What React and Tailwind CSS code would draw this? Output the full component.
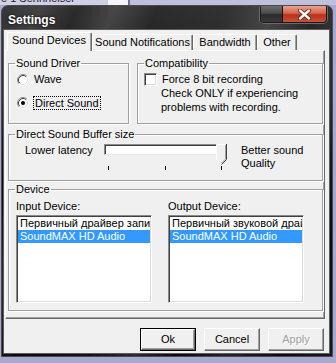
function Radio({ checked }) {
  return (
    <svg width="12" height="12" viewBox="0 0 12 12" className="shrink-0">
      <circle cx="6" cy="6" r="5.5" fill="#ffffff" />
      <path d="M2.11 9.89 A5.5 5.5 0 0 1 9.89 2.11" stroke="#8a8a8a" fill="none" />
      <path d="M2.82 9.18 A4.5 4.5 0 0 1 9.18 2.82" stroke="#404040" fill="none" />
      <path d="M9.18 2.82 A4.5 4.5 0 0 1 2.82 9.18" stroke="#dcdcdc" fill="none" />
      {checked && <circle cx="6" cy="6" r="2" fill="#000" />}
    </svg>
  );
}

function Group({ title, className, children }) {
  return (
    <fieldset className={"border border-[#a0a0a0] shadow-[inset_1px_1px_0_#ffffff,1px_1px_0_#ffffff] " + className}>
      <legend className="ml-[6px] px-[1px] text-[11px] leading-[13px]">{title}</legend>
      {children}
    </fieldset>
  );
}

function ListBox({ first }) {
  return (
    <div className="w-[136px] h-[88px] bg-white border border-t-[#8a8a8a] border-l-[#8a8a8a] border-r-white border-b-white shadow-[inset_1px_1px_0_#404040,inset_-1px_-1px_0_#dcdcdc] p-[1px] overflow-hidden">
      <div className="h-[13px] pl-[2px] whitespace-nowrap overflow-hidden leading-[13px]">{first}</div>
      <div className="h-[13px] pl-[2px] whitespace-nowrap overflow-hidden leading-[13px] bg-[#3399ff] text-white">SoundMAX HD Audio</div>
    </div>
  );
}

function Tab({ label, w, selected }) {
  if (selected) {
    return (
      <div className={"relative z-10 h-[19px] -mb-[1px] bg-[#f0f0f0] border-t border-l border-r border-t-white border-l-white border-r-[#696969] rounded-t-[2px] shadow-[inset_-1px_0_0_#a0a0a0] pt-[1px] pl-[4px] leading-[13px] text-[11px] whitespace-nowrap " + w}>
        {label}
      </div>
    );
  }
  return (
    <div className={"h-[16px] bg-[#f0f0f0] border-t border-l border-r border-t-white border-l-white border-r-[#696969] rounded-t-[2px] shadow-[inset_-1px_0_0_#a0a0a0] pt-[1px] flex justify-center leading-[13px] text-[11px] whitespace-nowrap " + w}>
      {label}
    </div>
  );
}

function Button({ children, def, disabled }) {
  if (def) {
    return (
      <div className="w-[56px] h-[23px] border border-black">
        <div className="h-full bg-[#f0f0f0] border border-t-white border-l-white border-r-[#696969] border-b-[#696969] shadow-[inset_-1px_-1px_0_#a0a0a0] flex items-center justify-center text-[11px] leading-[13px]">
          {children}
        </div>
      </div>
    );
  }
  return (
    <div className={"w-[56px] h-[23px] bg-[#f0f0f0] border border-t-white border-l-white border-r-[#696969] border-b-[#696969] shadow-[inset_-1px_-1px_0_#a0a0a0] flex items-center justify-center text-[11px] leading-[13px] " + (disabled ? "text-[#a0a0a0] [text-shadow:1px_1px_0_#ffffff]" : "")}>
      {children}
    </div>
  );
}

export default function App() {
  return (
    <div className="w-[336px] h-[363px] bg-[#a9a8d2] overflow-hidden font-['Liberation_Sans',Arial,sans-serif] text-[11px] leading-[13px] text-black">
      {/* background application strip */}
      <div className="h-[5px] flex overflow-hidden">
        <div className="w-[108px] bg-[#cfd0e8] overflow-hidden">
          <div className="-mt-[7px] pl-[1px] text-[11px] leading-[11px] text-[#222]">e 1 Sennheiser</div>
        </div>
        <div className="w-[20px] bg-[#f4f4fa]" />
        <div className="w-[2px] bg-[#70708a]" />
        <div className="flex-1 bg-[#bfc0dc]" />
      </div>

      {/* window */}
      <div className="ml-[1px] w-[332px] h-[352px] rounded-t-[7px] border border-[#4a4a4a] flex flex-col overflow-hidden bg-[linear-gradient(180deg,rgba(255,255,255,0.14)_0%,rgba(255,255,255,0)_40%),linear-gradient(112deg,#151515_0%,#262626_8%,#0a0a0a_16%,#2a2a2a_24%,#0b0b0b_33%,#121212_48%,#2c2c2c_58%,#0a0a0a_67%,#232323_78%,#0a0a0a_90%,#1a1a1a_100%)]">
        {/* title bar */}
        <div className="h-[24px] flex justify-between pl-[6px] pr-[5px]">
          <div className="pt-[8px] text-[12px] leading-[13px] font-bold text-white [text-shadow:0_0_3px_#000]">Settings</div>
          <div className="flex h-[17px] rounded-b-[4px] overflow-hidden border border-t-0 border-[#1a1a1a] shadow-[0_0_0_1px_#6a6a6a]">
            <div className="w-[22px] h-full bg-[linear-gradient(180deg,#6e6e6e_0%,#4a4a4a_45%,#2a2a2a_55%,#3a3a3a_100%)] border-r border-[#151515]" />
            <div className="w-[43px] h-full bg-[linear-gradient(180deg,#e9a08c_0%,#d5664c_45%,#b8321a_55%,#c9503a_100%)] flex items-center justify-center">
              <svg width="13" height="11" viewBox="0 0 13 11">
                <path d="M2 1.5 L11 9.5 M11 1.5 L2 9.5" stroke="#5a1a10" strokeWidth="4" strokeLinecap="round" />
                <path d="M2 1.5 L11 9.5 M11 1.5 L2 9.5" stroke="#ffffff" strokeWidth="2.4" strokeLinecap="round" />
              </svg>
            </div>
          </div>
        </div>

        {/* body */}
        <div className="flex-1 flex pl-[2px] pr-[3px] pb-[3px]">
          <div className="w-[325px] h-full bg-[#f0f0f0] shadow-[0_0_0_1px_#5c5c5c] flex flex-col">
            {/* tabs */}
            <div className="h-[18px] mt-[2px] pl-[3px] flex items-end">
              <Tab label="Sound Devices" w="w-[85px]" selected />
              <Tab label="Sound Notifications" w="w-[101px]" />
              <Tab label="Bandwidth" w="w-[64px]" />
              <Tab label="Other" w="w-[40px]" />
            </div>

            {/* panel */}
            <div className="ml-[1px] w-[320px] h-[269px] border border-t-white border-l-white border-r-[#696969] border-b-[#696969] shadow-[inset_-1px_-1px_0_#a0a0a0] pl-[2px] flex flex-col">
              <div className="mt-[6px] flex gap-[8px]">
                <Group title="Sound Driver" className="w-[121px] h-[67px]">
                  <div className="mt-[3px] pl-[8px] h-[13px] flex items-center gap-[5px]">
                    <Radio />
                    <span>Wave</span>
                  </div>
                  <div className="mt-[10px] pl-[8px] h-[14px] flex items-center gap-[4px]">
                    <Radio checked />
                    <span className="border border-dotted border-black px-[1px] leading-[12px]">Direct Sound</span>
                  </div>
                </Group>
                <Group title="Compatibility" className="w-[186px] h-[67px]">
                  <div className="mt-[3px] pl-[6px] h-[13px] flex items-center gap-[5px]">
                    <div className="w-[13px] h-[13px] bg-white border border-t-[#8a8a8a] border-l-[#8a8a8a] border-r-white border-b-white shadow-[inset_1px_1px_0_#404040,inset_-1px_-1px_0_#dcdcdc]" />
                    <span>Force 8 bit recording</span>
                  </div>
                  <div className="pl-[23px] leading-[14px]">
                    <div>Check ONLY if experiencing</div>
                    <div>problems with recording.</div>
                  </div>
                </Group>
              </div>

              <Group title="Direct Sound Buffer size" className="mt-[4px] w-[315px] h-[53px]">
                <div className="mt-[3px] pl-[16px] flex items-start">
                  <div className="w-[79px]">Lower latency</div>
                  <div className="relative w-[124px] h-[27px]">
                    <div className="w-[116px] h-[11px] bg-white border border-t-[#8a8a8a] border-l-[#8a8a8a] border-r-white border-b-[#e8e8e8] shadow-[inset_1px_1px_0_#404040]" />
                    <svg className="absolute left-[112px] top-0" width="11" height="21" viewBox="0 0 11 21">
                      <path d="M0.5 0.5 H10.5 V15.5 L5.5 20.5 L0.5 15.5 Z" fill="#f0f0f0" />
                      <path d="M0.5 15.5 V0.5 H9.5" stroke="#ffffff" fill="none" />
                      <path d="M10.5 0 V15.5 L5.5 20.5" stroke="#404040" fill="none" />
                      <path d="M9.5 1 V15 L5.5 19" stroke="#a0a0a0" fill="none" />
                      <path d="M0.5 15.5 L5 20" stroke="#ffffff" fill="none" />
                    </svg>
                    <div className="absolute left-[4px] top-[22px] w-[1px] h-[4px] bg-black" />
                    <div className="absolute left-[61px] top-[22px] w-[1px] h-[4px] bg-black" />
                    <div className="absolute left-[117px] top-[22px] w-[1px] h-[4px] bg-black" />
                  </div>
                  <div className="ml-[13px]">
                    <div>Better sound</div>
                    <div>Quality</div>
                  </div>
                </div>
              </Group>

              <Group title="Device" className="mt-[2px] w-[315px] h-[128px]">
                <div className="mt-[4px] pl-[7px] flex gap-[16px]">
                  <div className="flex flex-col">
                    <div className="h-[13px]">Input Device:</div>
                    <div className="mt-[2px]">
                      <ListBox first="Первичный драйвер записи звука" />
                    </div>
                  </div>
                  <div className="flex flex-col">
                    <div className="h-[13px]">Output Device:</div>
                    <div className="mt-[2px]">
                      <ListBox first="Первичный звуковой драйвер" />
                    </div>
                  </div>
                </div>
              </Group>
            </div>

            {/* buttons */}
            <div className="mt-[9px] pr-[5px] flex justify-end gap-[8px]">
              <Button def>Ok</Button>
              <Button>Cancel</Button>
              <Button disabled>Apply</Button>
            </div>
          </div>
        </div>
      </div>
    </div>
  );
}
